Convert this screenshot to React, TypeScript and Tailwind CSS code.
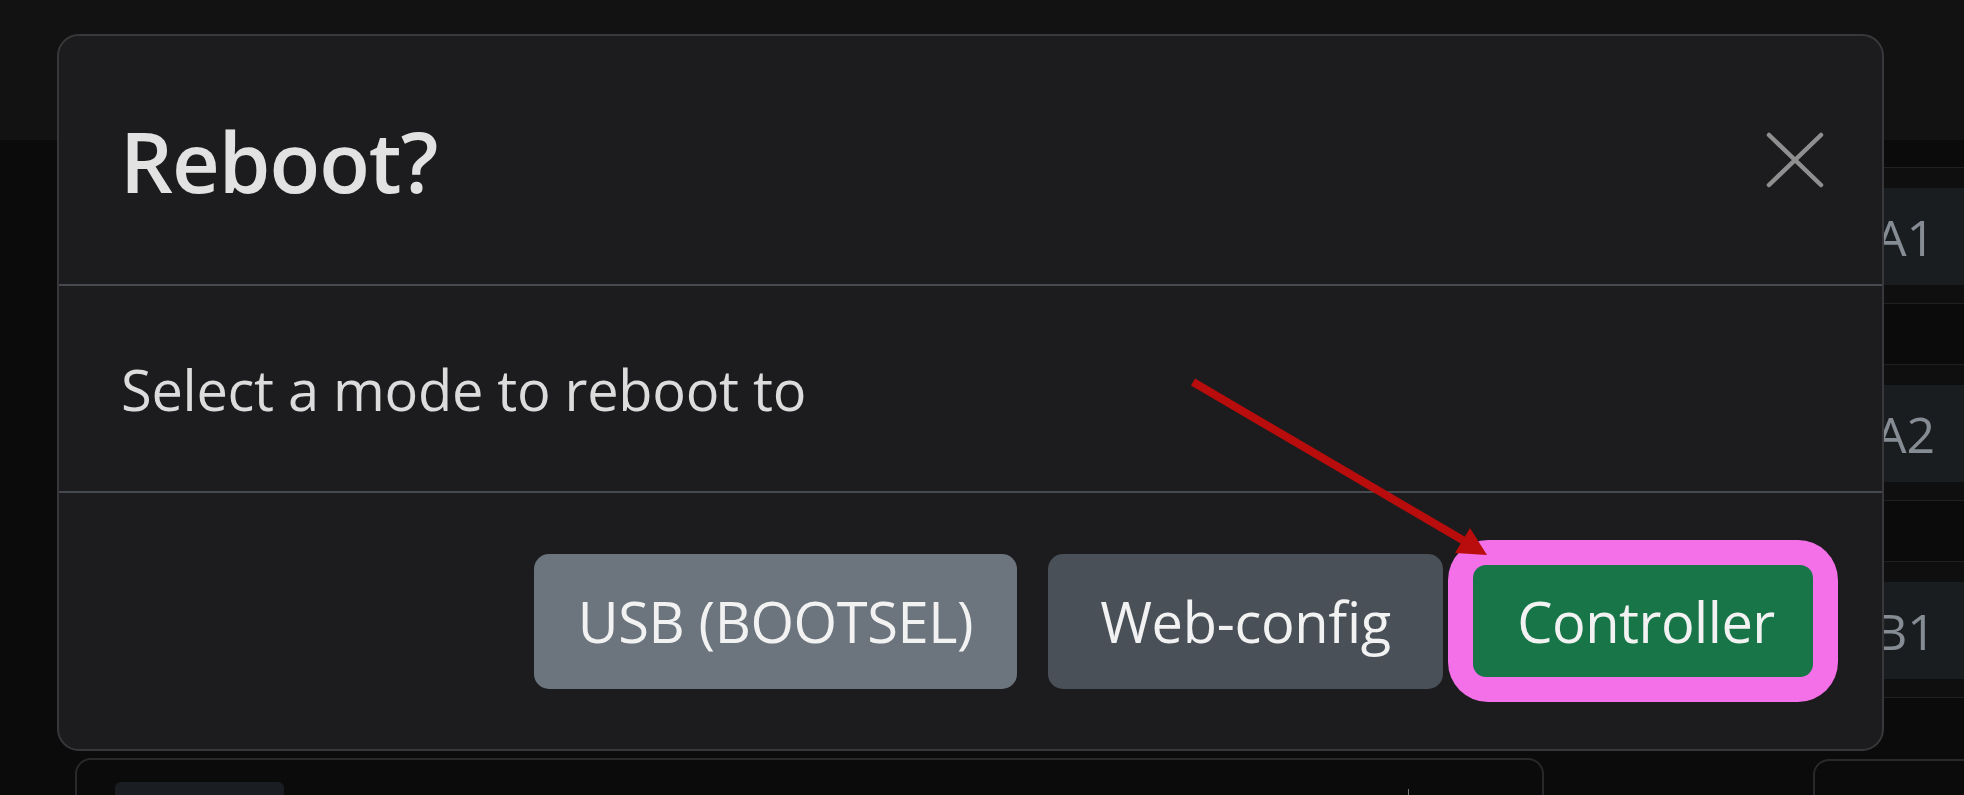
import React from "react";

// Rows of the settings table that sits behind the dialog
const pinRows = ["A1", "A2", "B1"];

function CloseIcon() {
  return (
    <svg width="58" height="56" viewBox="0 0 58 56" fill="none">
      <path
        d="M3 3L55 53M55 3L3 53"
        stroke="#8f8f8f"
        strokeWidth="4.5"
        strokeLinecap="round"
      />
    </svg>
  );
}

function Arrow() {
  return (
    <svg
      className="pointer-events-none absolute left-0 top-0"
      width="1964"
      height="795"
      viewBox="0 0 1964 795"
      fill="none"
    >
      <line x1="1193" y1="382" x2="1466" y2="542" stroke="#b90c0c" strokeWidth="8" />
      <polygon points="1487,555 1470,528 1455,553" fill="#b90c0c" />
    </svg>
  );
}

export default function App() {
  return (
    <div className="relative h-[795px] w-[1964px] overflow-hidden bg-[#0b0b0b] font-['Open_Sans',sans-serif]">
      {/* Page behind the backdrop */}
      <div className="flex h-full flex-col">
        <div className="h-[140px] shrink-0 bg-[#121212]" />
        <div className="flex flex-1 pl-[75px]">
          <div className="flex w-[1469px] flex-col pt-[618px]">
            <div className="flex h-[100px] rounded-t-[16px] border-2 border-[#29292b] pl-[38px] pt-[22px]">
              <div className="h-[60px] w-[169px] rounded-t-[6px] bg-[#1a1d21]" />
              <div className="ml-auto mr-[133px] mt-[7px] h-[8px] w-px bg-[#7a7a7a]" />
            </div>
          </div>

          <div className="ml-[269px] flex flex-1 flex-col pt-[27px]">
            <div className="flex flex-col gap-[60px]">
              {pinRows.map((pin) => (
                <div
                  key={pin}
                  className="border-y border-[#202022] bg-[#0f0f0f] pb-[18px] pt-[20px]"
                >
                  <div className="flex h-[97px] items-center bg-[#1a1d20] pl-[62px] text-[50px] leading-none text-[#868c94]">
                    {pin}
                  </div>
                </div>
              ))}
            </div>
            <div className="mt-[61px] h-[60px] rounded-tl-[16px] border-l-2 border-t-2 border-[#29292b]" />
          </div>
        </div>
      </div>

      {/* Reboot dialog */}
      <div className="absolute left-[57px] top-[34px] flex h-[717px] w-[1827px] flex-col rounded-[22px] border-2 border-[#38383b] bg-[#1c1c1e]">
        <div className="flex h-[250px] shrink-0 items-center justify-between border-b-2 border-[#464a50] pl-[61px] pr-[58px]">
          <h5 className="text-[83px] font-semibold leading-none tracking-[-1px] text-[#e2e2e2]">
            Reboot?
          </h5>
          <button className="flex items-center justify-center">
            <CloseIcon />
          </button>
        </div>

        <div className="flex h-[207px] shrink-0 items-center border-b-2 border-[#464a50] pl-[62px]">
          <p className="text-[56px] leading-none tracking-[-0.3px] text-[#dcdcdc]">
            Select a mode to reboot to
          </p>
        </div>

        <div className="flex flex-1 items-center justify-end pr-[44px]">
          <button className="flex h-[135px] w-[483px] items-center justify-center rounded-[15px] bg-[#6c757d] text-[56px] leading-none tracking-[-0.4px] text-[#f2f2f2]">
            USB (BOOTSEL)
          </button>
          <button className="ml-[31px] flex h-[135px] w-[395px] items-center justify-center rounded-[15px] bg-[#495057] text-[56px] leading-none tracking-[-0.3px] text-[#f2f2f2]">
            Web-config
          </button>
          <div className="ml-[5px] rounded-[40px] bg-[#f470e8] p-[25px]">
            <button className="flex h-[112px] w-[340px] items-center justify-center rounded-[13px] bg-[#177548] pl-[6px] text-[56px] leading-none tracking-[-0.5px] text-[#f2f2f2]">
              Controller
            </button>
          </div>
        </div>
      </div>

      <Arrow />
    </div>
  );
}
